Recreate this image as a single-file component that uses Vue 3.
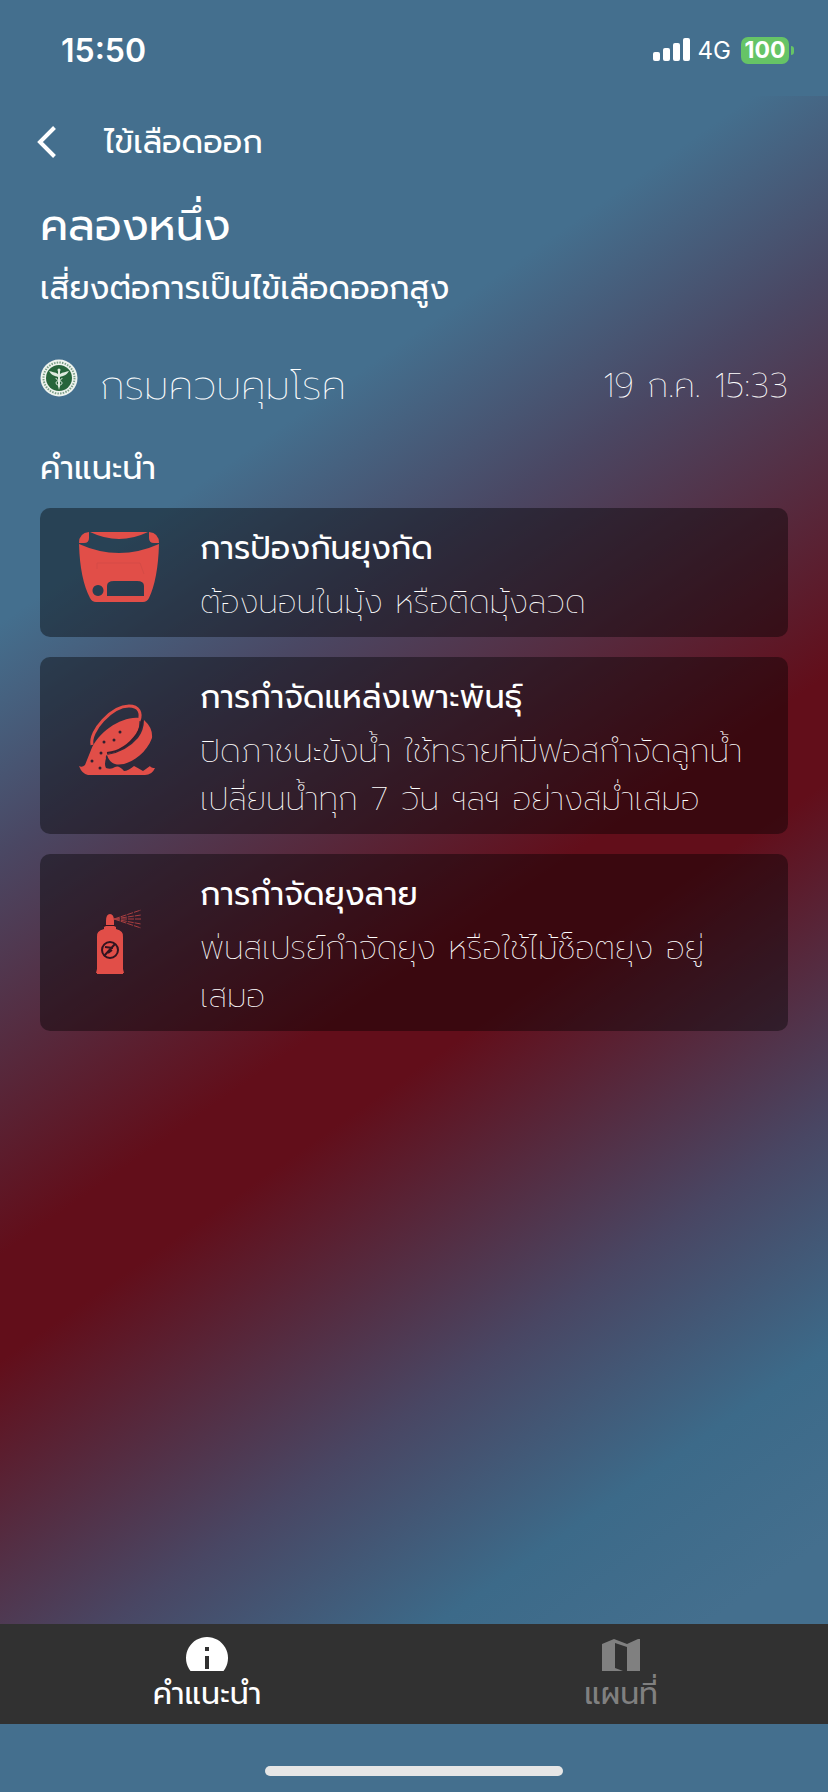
<!-- src/App.vue -->
<template>
  <div class="app">
    <div class="status-bar">
      <span class="clock">15:50</span>
      <div class="status-icons">
        <svg class="signal" viewBox="0 0 37 24" aria-hidden="true">
          <rect x="0" y="14" width="7" height="9" rx="2" />
          <rect x="10" y="10" width="7" height="13" rx="2" />
          <rect x="20" y="5" width="7" height="18" rx="2" />
          <rect x="30" y="0" width="7" height="23" rx="2" />
        </svg>
        <span class="network">4G</span>
        <span class="battery">100</span>
        <span class="battery-tip"></span>
      </div>
    </div>

    <main class="content">
      <header class="nav">
        <button class="back" aria-label="ย้อนกลับ">
          <svg viewBox="0 0 20 34" aria-hidden="true">
            <path d="M17.500 2.500L3 17l14.500 14.500" fill="none" stroke="#fff" stroke-width="4" />
          </svg>
        </button>
        <span class="nav-title">ไข้เลือดออก</span>
      </header>

      <h1 class="place">คลองหนึ่ง</h1>
      <p class="risk">เสี่ยงต่อการเป็นไข้เลือดออกสูง</p>

      <div class="source">
        <svg class="logo" viewBox="0 0 38 38" aria-hidden="true">
          <circle cx="19" cy="19" r="18.500" fill="#eef3ee" />
          <circle cx="19" cy="19" r="15.500" fill="none" stroke="#7c9f88" stroke-width="2" stroke-dasharray="1.500 1.200" />
          <circle cx="19" cy="19" r="13" fill="#27653b" />
          <g fill="#dfeadf">
            <circle cx="19" cy="11" r="1.500" />
            <path d="M18 10h2v17l-1 4-1-4z" />
            <path d="M18 18c-3-1-7-2-9-6 3 1 6 1 9 3zM20 18c3-1 7-2 9-6-3 1-6 1-9 3z" />
          </g>
          <path d="M16 19c0 3 6 2 6 5s-4 1-3 4M22 19c0 3-6 2-6 5s4 1 3 4" fill="none" stroke="#dfeadf" stroke-width="1" />
        </svg>
        <span class="agency">กรมควบคุมโรค</span>
        <time class="date">19 ก.ค. 15:33</time>
      </div>

      <h2 class="section-title">คำแนะนำ</h2>
      <ul class="cards">
        <li v-for="item in advices" :key="item.icon" class="card">
          <svg v-if="item.icon === 'net'" class="card-icon" viewBox="0 6 80 80" aria-hidden="true">
            <path d="M11 5h58Q40 19 11 5z" />
            <path d="M10 5v6q0 5-5 5H0Q0 6 10 5zM70 5v6q0 5 5 5h5Q80 6 70 5z" />
            <path fill-rule="evenodd" d="M0 17q40 18 80 0Q79 52 70 71q-2 4-6 4H17q-4 0-6-4Q1 52 0 17zM19 58a5.500 5.500 0 1 0 .01 0zM28 69h37V59q0-5-7-5H35q-7 0-7 5z" />
            <path d="M18 42v-6h43l4 11" fill="none" stroke="#d54b46" stroke-width="1" />
          </svg>
          <svg v-else-if="item.icon === 'bucket'" class="card-icon" viewBox="0 6 80 80" aria-hidden="true">
            <path d="M13 45C10 31 33 6 50 6c10 0 13 7 10 15" fill="none" stroke="#e14e48" stroke-width="3" />
            <path fill-rule="evenodd" d="M60 18C43 16 19 32 12 50L6 65q-3 3-6 1 3 8 9 9h57q7 0 10-7-4 0-5-2-4 3-7 5-5-3-9-5-6 5-10 5-5-6-9-4-4 3-9 1-2-3 0-10-1-2 2-4 14-2 25-15Q62 29 60 18z" />
            <path d="M65 20q9 8 8 18C66 57 46 67 36 64q-6-2-8-9 19-3 31-17 6-8 6-18z" />
            <g fill="#31202f">
              <circle cx="41" cy="32" r="1.500" />
              <circle cx="25" cy="42" r="1.500" />
              <circle cx="35" cy="40" r="1.500" />
              <circle cx="22" cy="53" r="1.500" />
              <circle cx="13" cy="61" r="1.500" />
              <circle cx="21" cy="68" r="1.500" />
            </g>
            <path d="M28 53q18-2 30-19 5-8 5-14" fill="none" stroke="#31202f" stroke-width="2" />
          </svg>
          <svg v-else class="card-icon" viewBox="0 -1 80 80" aria-hidden="true">
            <path d="M27 22v-5q0-7 4-7t4 7v5l2 1v2q8 2 7 8v32l1 4h-1v1H18v-1h-1l1-4V33q-1-6 7-8v-2z" />
            <g fill="none" stroke="#321420">
              <path d="M24 21.500h12" stroke-width="1" />
              <circle cx="31" cy="46" r="8" stroke-width="2" />
              <path d="M25 52l11-12M26 43l8 1M29 49l4-3" stroke-width="2" />
            </g>
            <path d="M35 15l27-9M35 15l27-4M35 15h27M35 15l27 5M35 15l27 9" fill="none" stroke="#a83e40" stroke-width="1" stroke-dasharray="6 1" />
          </svg>
          <div class="card-text">
            <h3 class="card-title">{{ item.title }}</h3>
            <p class="card-body">
              <span v-for="line in item.lines" :key="line" class="line">{{ line }}</span>
            </p>
          </div>
        </li>
      </ul>
    </main>

    <nav class="tabs">
      <button class="tab" :class="{ active: tab === 'advice' }" @click="tab = 'advice'">
        <svg class="tab-icon" viewBox="0 0 42 34" aria-hidden="true">
          <path fill-rule="evenodd" d="M21 0a21 21 0 1 0 .01 0zM19 10h4v4h-4zM19 19h4v13h-4z" />
        </svg>
        <span>คำแนะนำ</span>
      </button>
      <button class="tab" :class="{ active: tab === 'map' }" @click="tab = 'map'">
        <svg class="tab-icon" viewBox="0 0 42 34" aria-hidden="true">
          <path d="M2 7l12-5 13 5 11-5h2v32H27V10L15 6v25l8 3H2z" />
        </svg>
        <span>แผนที่</span>
      </button>
    </nav>

    <div class="home-area">
      <span class="home-indicator"></span>
    </div>
  </div>
</template>

<script setup>
import { ref } from 'vue'

const tab = ref('advice')

const advices = [
  {
    icon: 'net',
    title: 'การป้องกันยุงกัด',
    lines: ['ต้องนอนในมุ้ง หรือติดมุ้งลวด']
  },
  {
    icon: 'bucket',
    title: 'การกำจัดแหล่งเพาะพันธุ์',
    lines: ['ปิดภาชนะขังน้ำ ใช้ทรายทีมีฟอสกำจัดลูกน้ำ', 'เปลี่ยนน้ำทุก 7 วัน ฯลฯ อย่างสม่ำเสมอ']
  },
  {
    icon: 'spray',
    title: 'การกำจัดยุงลาย',
    lines: ['พ่นสเปรย์กำจัดยุง หรือใช้ไม้ช็อตยุง อยู่', 'เสมอ']
  }
]
</script>

<style>
body {
  margin: 0;
  background: #446f8e;
}
</style>

<style scoped>
.app {
  display: flex;
  flex-direction: column;
  min-height: 100vh;
  color: #fff;
  background: #446f8e;
  font-family: Prompt, Kanit, "Noto Sans Thai", "Noto Sans Thai UI", "Noto Sans", Inter, sans-serif;
}
.status-bar {
  display: flex;
  align-items: center;
  justify-content: space-between;
  box-sizing: border-box;
  height: 96px;
  padding: 4px 34px 0 61px;
  font-family: Inter, "Liberation Sans", sans-serif;
}
.clock {
  font-size: 32px;
  font-weight: 600;
}
.status-icons {
  display: flex;
  align-items: center;
}
.signal {
  width: 37px;
  height: 24px;
  fill: #fff;
}
.network {
  margin: 0 10px 0 8px;
  font-size: 24px;
}
.battery {
  width: 48px;
  border-radius: 7px;
  background: #66c466;
  font-size: 23px;
  font-weight: 700;
  line-height: 27px;
  text-align: center;
}
.battery-tip {
  width: 3px;
  height: 9px;
  margin-left: 2px;
  border-radius: 0 4px 4px 0;
  background: #66c466;
}
.content {
  flex: 1;
  padding: 0 40px;
  background: linear-gradient(145deg, #446f8e 25%, #4a4763 36%, #620e1a 55%, #620e1a 60%, #494663 76%, #3c6a89 87%, #446f8e 96%);
}
.nav {
  display: flex;
  align-items: center;
  height: 92px;
}
.back {
  display: flex;
  margin: 0 0 0 -3px;
  padding: 0;
  border: 0;
  background: none;
}
.back svg {
  width: 20px;
  height: 34px;
}
.nav-title {
  margin-left: 47px;
  font-size: 32px;
}
.place {
  margin: 0;
  font-size: 44px;
  font-weight: 400;
  line-height: 76px;
}
.risk {
  margin: 0;
  font-size: 32px;
  line-height: 50px;
}
.source {
  display: flex;
  align-items: center;
  height: 60px;
  margin-top: 41px;
  font-weight: 250;
}
.logo {
  width: 38px;
  height: 38px;
  margin-bottom: 14px;
}
.agency {
  margin-left: 22px;
  font-size: 40px;
}
.date {
  margin-left: auto;
  font-size: 34px;
}
.section-title {
  margin: 26px 0 11px;
  font-size: 32px;
  font-weight: 400;
  line-height: 56px;
}
.cards {
  display: grid;
  gap: 20px;
  margin: 0;
  padding: 0;
  list-style: none;
}
.card {
  display: flex;
  align-items: center;
  padding: 17px 39px 10px;
  border-radius: 10px;
  background: rgba(0, 0, 0, 0.4);
}
.card-icon {
  flex: none;
  width: 80px;
  height: 80px;
  margin-bottom: 6px;
  overflow: visible;
  fill: #e14e48;
}
.card-text {
  flex: 1;
  min-width: 0;
  margin-left: 41px;
}
.card-title {
  margin: 0 0 6px;
  font-size: 32px;
  font-weight: 400;
  line-height: 48px;
}
.card-body {
  margin: 0;
  font-size: 32px;
  font-weight: 250;
  line-height: 48px;
}
.line {
  display: block;
}
.tabs {
  display: flex;
  height: 100px;
  background: #313131;
}
.tab {
  display: flex;
  flex: 1;
  flex-direction: column;
  align-items: center;
  margin: 0;
  padding: 13px 0 0;
  border: 0;
  color: #808080;
  background: none;
  font-family: inherit;
  font-size: 30px;
  line-height: 46px;
}
.tab.active {
  color: #fff;
}
.tab-icon {
  flex: none;
  width: 42px;
  height: 34px;
  fill: currentColor;
}
.home-area {
  display: flex;
  align-items: center;
  justify-content: center;
  height: 68px;
}
.home-indicator {
  width: 36%;
  height: 10px;
  margin-top: 26px;
  border-radius: 5px;
  background: #e6e6e6;
}
</style>
